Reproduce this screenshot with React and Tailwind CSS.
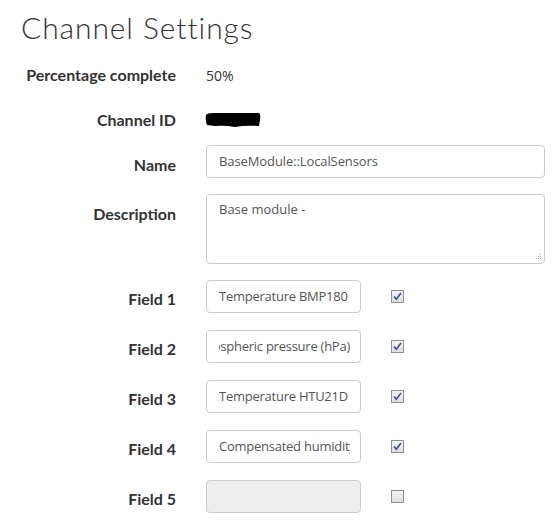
import React from 'react';

const Check = ({ checked }) => (
  <div className="w-[13px] h-[13px] border border-[#8e8f8f] bg-gradient-to-b from-[#f4f4f4] to-[#dedede] flex items-center justify-center">
    {checked && (
      <svg width="9" height="9" viewBox="0 0 9 9">
        <path d="M1 4.5 L3.3 7.3 L8 1" fill="none" stroke="#3b4d9e" strokeWidth="1.6" />
      </svg>
    )}
  </div>
);

const Label = ({ children, className = '' }) => (
  <div className={`w-[176px] shrink-0 text-right font-['Lato','Noto_Sans',sans-serif] font-bold text-[16px] text-[#333] ${className}`}>
    {children}
  </div>
);

const fields = [
  { label: 'Field 1', value: 'Temperature BMP180', checked: true },
  { label: 'Field 2', value: 'Atmospheric pressure (hPa)', checked: true, end: true },
  { label: 'Field 3', value: 'Temperature HTU21D', checked: true },
  { label: 'Field 4', value: 'Compensated humidity', checked: true },
  { label: 'Field 5', value: '', checked: false, disabled: true },
];

export default function App() {
  return (
    <div className="w-[553px] h-[522px] bg-white overflow-hidden font-['Open_Sans',sans-serif] text-[#555]">
      <h1 className="pl-[21px] pt-[9px] font-['Lato',sans-serif] font-light text-[30px] leading-[36px] text-[#333] tracking-[0.9px]">
        Channel Settings
      </h1>

      <div className="mt-[20px] flex items-center h-[20px]">
        <Label>Percentage complete</Label>
        <div className="ml-[30px] text-[14px] text-[#333]">50%</div>
      </div>

      <div className="mt-[25px] flex items-center h-[20px]">
        <Label>Channel ID</Label>
        <div className="ml-[29px]">
          <svg width="56" height="16" viewBox="0 0 56 16">
            <path d="M1 3 Q2 1 8 1 L54 1 Q56 2 55 8 L54 14 Q40 13 30 15 Q20 13 10 14 L2 13 Q0 8 1 3 Z" fill="#000" />
          </svg>
        </div>
      </div>

      <div className="mt-[15px] flex">
        <Label className="pt-[8px]">Name</Label>
        <div className="ml-[30px] w-[339px] h-[33px] border border-[#ccc] rounded-[4px] px-[12px] flex items-center text-[13px] tracking-[-0.1px] whitespace-nowrap">
          BaseModule::LocalSensors
        </div>
      </div>

      <div className="mt-[16px] flex">
        <Label className="pt-[8px]">Description</Label>
        <div className="ml-[30px] w-[339px] h-[70px] border border-[#ccc] rounded-[4px] px-[12px] pt-[5px] text-[13px] relative">
          Base module -
          <svg className="absolute right-[2px] bottom-[2px]" width="7" height="7" viewBox="0 0 7 7">
            <rect x="5" y="0" width="1" height="1" fill="#999" />
            <rect x="5" y="2" width="1" height="1" fill="#999" />
            <rect x="3" y="2" width="1" height="1" fill="#999" />
            <rect x="5" y="4" width="1" height="1" fill="#999" />
            <rect x="3" y="4" width="1" height="1" fill="#999" />
            <rect x="1" y="4" width="1" height="1" fill="#999" />
          </svg>
        </div>
      </div>

      <div className="mt-[16px] flex flex-col gap-[17px]">
        {fields.map((f) => (
          <div key={f.label} className="flex items-center">
            <Label className="pt-[4px]">{f.label}</Label>
            <div
              className={`ml-[30px] w-[155px] h-[33px] border border-[#ccc] rounded-[4px] pl-[12px] pr-[10px] flex items-center text-[13px] tracking-[-0.25px] ${
                f.disabled ? 'bg-[#eee]' : 'bg-white'
              }`}
            >
              <div className={`w-full flex overflow-hidden whitespace-nowrap ${f.end ? 'justify-end' : ''}`}>
                <span className="shrink-0">{f.value}</span>
              </div>
            </div>
            <div className="ml-[30px]">
              <Check checked={f.checked} />
            </div>
          </div>
        ))}
      </div>
    </div>
  );
}
